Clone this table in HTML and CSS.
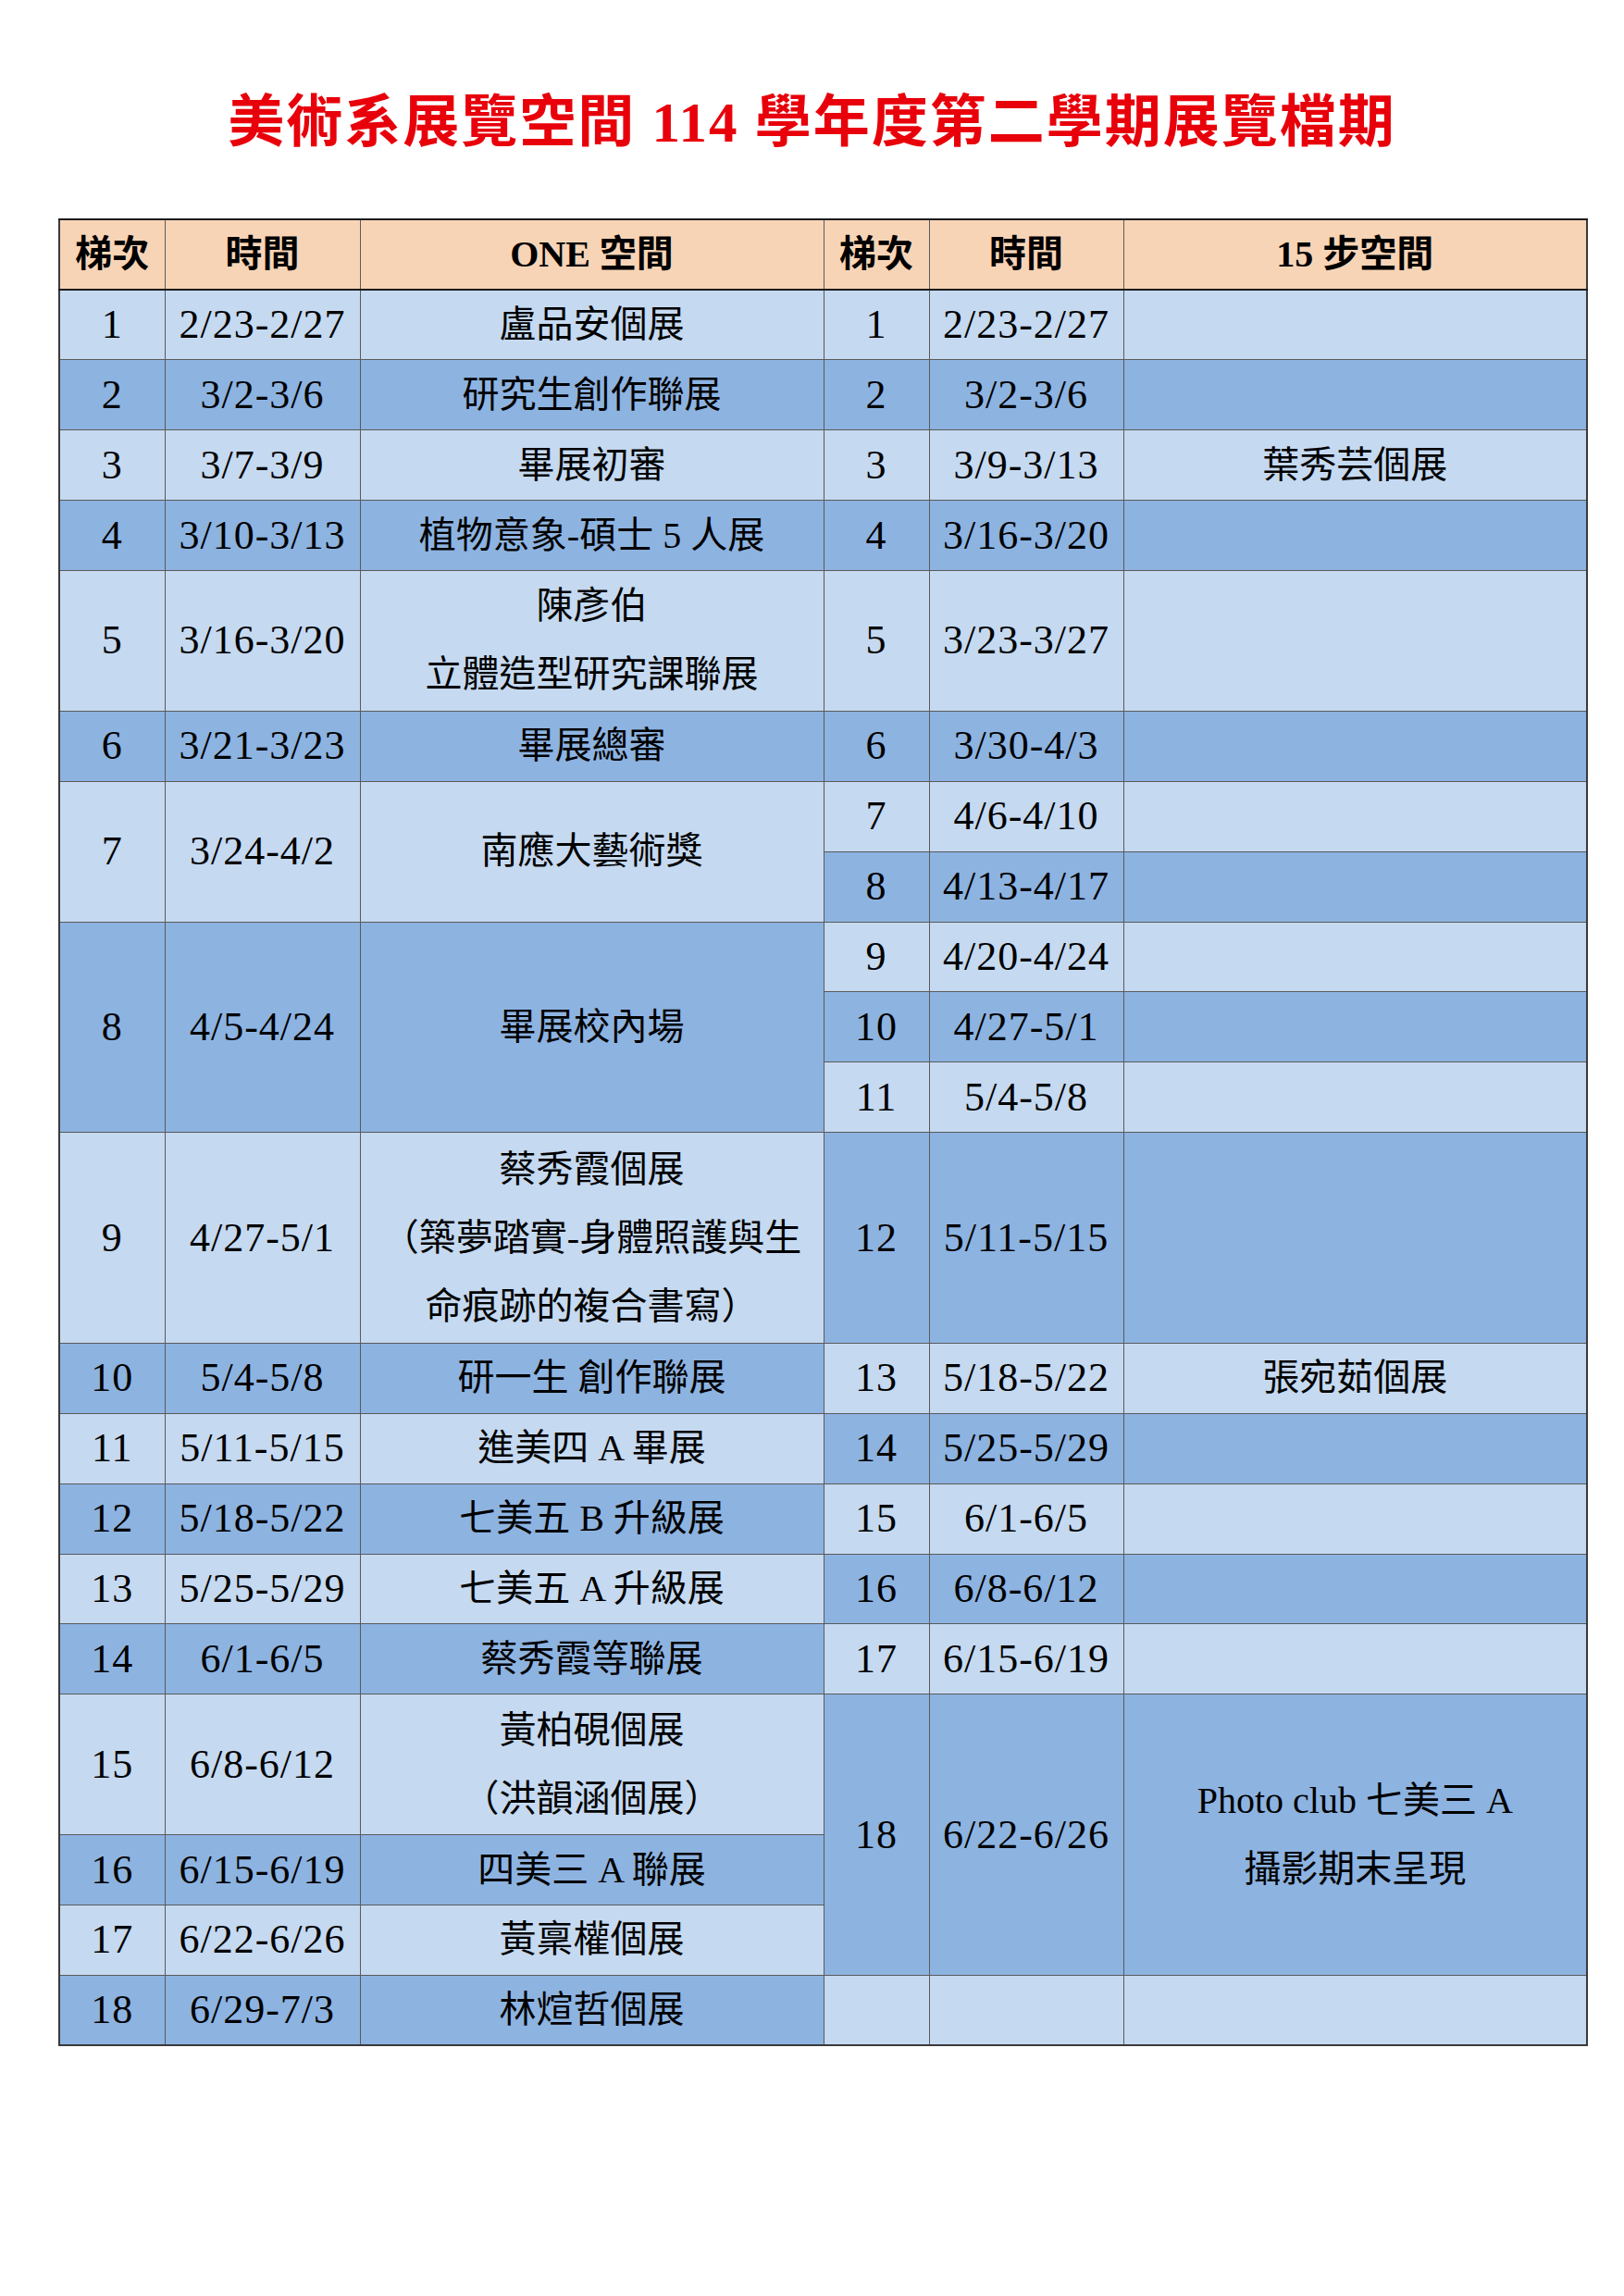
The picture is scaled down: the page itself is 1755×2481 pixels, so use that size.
FILE: index.html
```html
<!DOCTYPE html>
<html lang="zh-Hant">
<head>
<meta charset="utf-8">
<title>美術系展覽空間114學年度第二學期展覽檔期</title>
<link rel="stylesheet" href="styles.css">
</head>
<body>
<div class="page">
  <h1 class="title">美術系展覽空間 114 學年度第二學期展覽檔期</h1>
  <table class="sched">
    <colgroup>
      <col class="c-no"><col class="c-date-l"><col class="c-name">
      <col class="c-no"><col class="c-date-r"><col class="c-name-r">
    </colgroup>
    <thead>
      <tr>
        <th>梯次</th><th>時間</th><th>ONE 空間</th>
        <th>梯次</th><th>時間</th><th>15 步空間</th>
      </tr>
    </thead>
    <tbody>
      <tr>
        <td class="lt n">1</td><td class="lt n">2/23-2/27</td><td class="lt">盧品安個展</td>
        <td class="lt n">1</td><td class="lt n">2/23-2/27</td><td class="lt"></td>
      </tr>
      <tr>
        <td class="dk n">2</td><td class="dk n">3/2-3/6</td><td class="dk">研究生創作聯展</td>
        <td class="dk n">2</td><td class="dk n">3/2-3/6</td><td class="dk"></td>
      </tr>
      <tr>
        <td class="lt n">3</td><td class="lt n">3/7-3/9</td><td class="lt">畢展初審</td>
        <td class="lt n">3</td><td class="lt n">3/9-3/13</td><td class="lt">葉秀芸個展</td>
      </tr>
      <tr>
        <td class="dk n">4</td><td class="dk n">3/10-3/13</td><td class="dk">植物意象-碩士 5 人展</td>
        <td class="dk n">4</td><td class="dk n">3/16-3/20</td><td class="dk"></td>
      </tr>
      <tr>
        <td class="lt n" rowspan="2">5</td><td class="lt n" rowspan="2">3/16-3/20</td><td class="lt multi" rowspan="2">陳彥伯<br>立體造型研究課聯展</td>
        <td class="lt n" rowspan="2">5</td><td class="lt n" rowspan="2">3/23-3/27</td><td class="lt" rowspan="2"></td>
      </tr>
      <tr></tr>
      <tr>
        <td class="dk n">6</td><td class="dk n">3/21-3/23</td><td class="dk">畢展總審</td>
        <td class="dk n">6</td><td class="dk n">3/30-4/3</td><td class="dk"></td>
      </tr>
      <tr>
        <td class="lt n" rowspan="2">7</td><td class="lt n" rowspan="2">3/24-4/2</td><td class="lt" rowspan="2">南應大藝術獎</td>
        <td class="lt n">7</td><td class="lt n">4/6-4/10</td><td class="lt"></td>
      </tr>
      <tr>
        <td class="dk n">8</td><td class="dk n">4/13-4/17</td><td class="dk"></td>
      </tr>
      <tr>
        <td class="dk n" rowspan="3">8</td><td class="dk n" rowspan="3">4/5-4/24</td><td class="dk" rowspan="3">畢展校內場</td>
        <td class="lt n">9</td><td class="lt n">4/20-4/24</td><td class="lt"></td>
      </tr>
      <tr>
        <td class="dk n">10</td><td class="dk n">4/27-5/1</td><td class="dk"></td>
      </tr>
      <tr>
        <td class="lt n">11</td><td class="lt n">5/4-5/8</td><td class="lt"></td>
      </tr>
      <tr>
        <td class="lt n" rowspan="3">9</td><td class="lt n" rowspan="3">4/27-5/1</td><td class="lt multi" rowspan="3">蔡秀霞個展<br>（築夢踏實-身體照護與生<br>命痕跡的複合書寫）</td>
        <td class="dk n" rowspan="3">12</td><td class="dk n" rowspan="3">5/11-5/15</td><td class="dk" rowspan="3"></td>
      </tr>
      <tr></tr>
      <tr></tr>
      <tr>
        <td class="dk n">10</td><td class="dk n">5/4-5/8</td><td class="dk">研一生 創作聯展</td>
        <td class="lt n">13</td><td class="lt n">5/18-5/22</td><td class="lt">張宛茹個展</td>
      </tr>
      <tr>
        <td class="lt n">11</td><td class="lt n">5/11-5/15</td><td class="lt">進美四 A 畢展</td>
        <td class="dk n">14</td><td class="dk n">5/25-5/29</td><td class="dk"></td>
      </tr>
      <tr>
        <td class="dk n">12</td><td class="dk n">5/18-5/22</td><td class="dk">七美五 B 升級展</td>
        <td class="lt n">15</td><td class="lt n">6/1-6/5</td><td class="lt"></td>
      </tr>
      <tr>
        <td class="lt n">13</td><td class="lt n">5/25-5/29</td><td class="lt">七美五 A 升級展</td>
        <td class="dk n">16</td><td class="dk n">6/8-6/12</td><td class="dk"></td>
      </tr>
      <tr>
        <td class="dk n">14</td><td class="dk n">6/1-6/5</td><td class="dk">蔡秀霞等聯展</td>
        <td class="lt n">17</td><td class="lt n">6/15-6/19</td><td class="lt"></td>
      </tr>
      <tr>
        <td class="lt n" rowspan="2">15</td><td class="lt n" rowspan="2">6/8-6/12</td><td class="lt multi" rowspan="2">黃柏硯個展<br>（洪韻涵個展）</td>
        <td class="dk n" rowspan="4">18</td><td class="dk n" rowspan="4">6/22-6/26</td><td class="dk multi" rowspan="4">Photo club 七美三 A<br>攝影期末呈現</td>
      </tr>
      <tr></tr>
      <tr>
        <td class="dk n">16</td><td class="dk n">6/15-6/19</td><td class="dk">四美三 A 聯展</td>
      </tr>
      <tr>
        <td class="lt n">17</td><td class="lt n">6/22-6/26</td><td class="lt">黃稟權個展</td>
      </tr>
      <tr>
        <td class="dk n">18</td><td class="dk n">6/29-7/3</td><td class="dk">林煊哲個展</td>
        <td class="lt"></td><td class="lt"></td><td class="lt"></td>
      </tr>
    </tbody>
  </table>
</div>
</body>
</html>
```
FILE: styles.css
```css
html, body {
  margin: 0;
  padding: 0;
  background: #ffffff;
}

body {
  font-family: "Liberation Serif", "Noto Sans CJK TC", serif;
  color: #000000;
}

.page {
  padding: 102px 0 0 0;
}

.title {
  margin: 0;
  text-align: center;
  font-size: 61px;
  line-height: 61px;
  font-weight: 700;
  letter-spacing: 2px;
  color: #e8000b;
  font-family: "Liberation Serif", "Noto Sans CJK TC", serif;
}

.sched {
  margin: 73px 0 0 63px;
  width: 1651px;
  border-collapse: collapse;
  table-layout: fixed;
  border: 2px solid #3a3a3a;
}

.c-no { width: 114px; }
.c-date-l { width: 211px; }
.c-name { width: 501px; }
.c-date-r { width: 210px; }
.c-name-r { width: 501px; }

.sched tr {
  height: 75.9px;
}

.sched th,
.sched td {
  padding: 0;
  text-align: center;
  vertical-align: middle;
  white-space: nowrap;
  border: 1.5px solid #5a5a5a;
  font-size: 40px;
  line-height: 74px;
  font-weight: 400;
}

.sched th {
  background: #f8d4b6;
  font-weight: 700;
  border-top: 2px solid #1a1a1a;
  border-bottom: 2px solid #1a1a1a;
}

.sched td.n {
  font-size: 44px;
  letter-spacing: 1px;
}

.sched td.lt {
  background: #c5d9f0;
}

.sched td.dk {
  background: #8db3e1;
}

.sched td.multi {
  line-height: 74px;
}
```
